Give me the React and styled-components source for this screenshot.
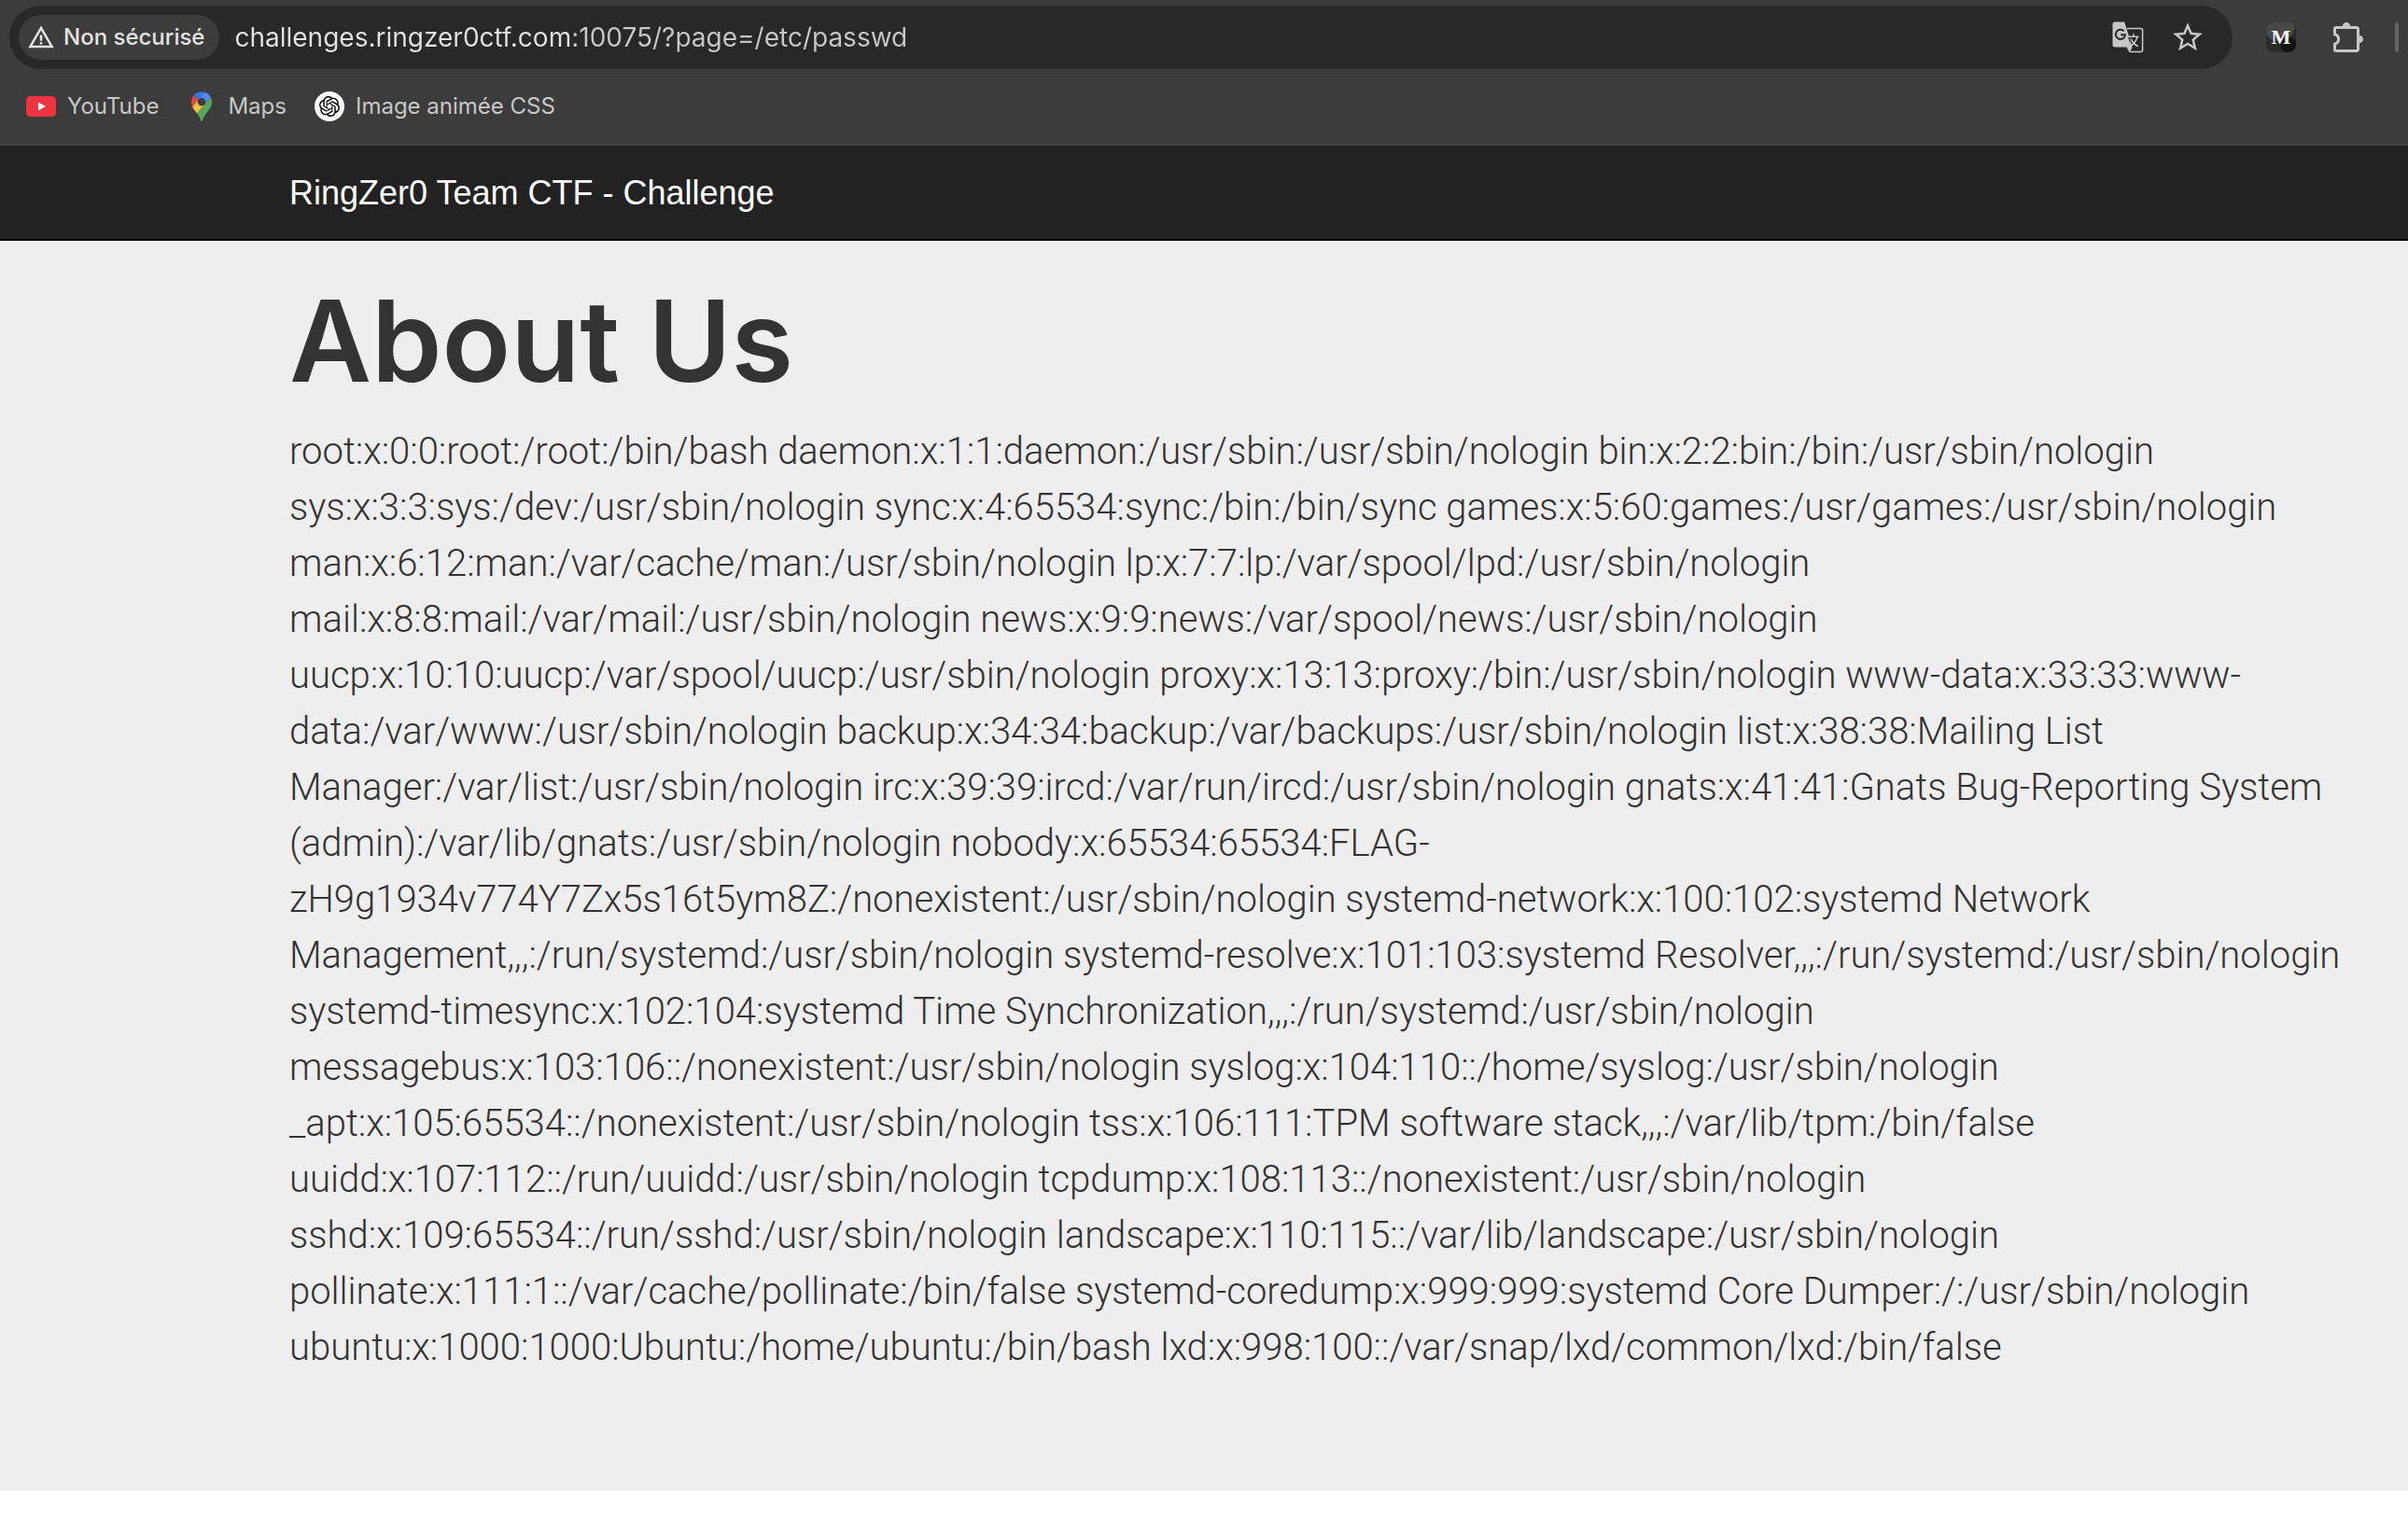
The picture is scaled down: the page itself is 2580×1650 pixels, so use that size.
import React, { useState } from "react";
import styled, { createGlobalStyle } from "styled-components";
import { MdStarBorder, MdWarningAmber } from "react-icons/md";
import { SiOpenai } from "react-icons/si";

const GlobalStyle = createGlobalStyle`
  *, *::before, *::after { box-sizing: border-box; }
  body { margin: 0; background: #fff; }
  svg { flex: none; }
`;

const uiFont = `Inter, "Liberation Sans", sans-serif`;

const Page = styled.div`
  display: flex;
  flex-direction: column;
`;

const Browser = styled.header`
  display: flex;
  flex-direction: column;
  background: #3c3c3c;
  border-bottom: 2px solid #464646;
  font-family: ${uiFont};
`;

const Toolbar = styled.div`
  display: flex;
  align-items: center;
  padding: 6px 10px;
`;

const AddressBar = styled.div`
  flex: 1;
  min-width: 0;
  height: 68px;
  display: flex;
  align-items: center;
  padding: 0 29px 0 10px;
  border-radius: 34px;
  background: #282828;
`;

const IconButton = styled.button`
  flex: none;
  display: flex;
  align-items: center;
  justify-content: center;
  width: ${(p) => p.$size}px;
  height: ${(p) => p.$size}px;
  padding: 0;
  border: 0;
  background: none;
  color: #c7c7c7;
`;

const SecurityChip = styled.button`
  flex: none;
  display: flex;
  align-items: center;
  gap: 9px;
  height: 48px;
  padding: 0 16px 0 9px;
  border: 0;
  border-radius: 24px;
  background: #3c3c3c;
  color: #e3e3e3;
  font: 500 24px/32px ${uiFont};
`;

const AddressInput = styled.input`
  flex: 1;
  min-width: 0;
  height: 48px;
  margin: 0 16px;
  padding: 0;
  border: 0;
  outline: 0;
  background: linear-gradient(90deg, #e3e3e3 360px, #c7c7c7 360px);
  background-clip: text;
  -webkit-background-clip: text;
  -webkit-text-fill-color: transparent;
  color: #e3e3e3;
  font: 400 28px/48px ${uiFont};
`;

const AddressActions = styled.div`
  display: flex;
  align-items: center;
  gap: 27px;
`;

const Extensions = styled.div`
  display: flex;
  align-items: center;
  gap: 40px;
  padding-left: 36px;
`;

const MediumButton = styled(IconButton)`
  border-radius: 8px;
  background:
    radial-gradient(circle at 24px 24px, #141414 8px, transparent 9px),
    radial-gradient(circle at 14px 4px, #484848 16px, transparent 17px),
    #2b2b2b;
  color: #fff;
  font: 700 22px/32px "Liberation Serif", serif;
`;

const Divider = styled.span`
  width: 4px;
  height: 32px;
  margin-left: -8px;
  border-radius: 2px;
  background: #636363;
`;

const Bookmarks = styled.nav`
  display: flex;
  align-items: center;
  gap: 30px;
  padding: 14px 28px 20px;
`;

const Bookmark = styled.a`
  display: flex;
  align-items: center;
  gap: 12px;
  height: 40px;
  color: #c7c7c7;
  font-size: 24px;
  line-height: 32px;
  text-decoration: none;
`;

const Favicon = styled.span`
  display: flex;
  align-items: center;
  justify-content: center;
  width: 32px;
  height: 32px;
  border-radius: 50%;
  background: ${(p) => p.$fill || "none"};
  color: #000;
`;

const SiteNav = styled.nav`
  display: flex;
  align-items: center;
  height: 102px;
  padding: 2px 60px 0 310px;
  background: #222;
  border-bottom: 2px solid #080808;
`;

const Brand = styled.a`
  color: #fff;
  font: 400 36px/40px "Liberation Sans", Arial, sans-serif;
  text-decoration: none;
`;

const Jumbotron = styled.main`
  padding: 44px 60px 123px 310px;
  background: #eee;
  color: #333;
`;

const Title = styled.h1`
  margin: 0 0 26px;
  font: 600 121px/126px Inter, "Liberation Sans", sans-serif;
`;

const Lead = styled.p`
  margin: 0;
  font: 300 40px/60px Roboto, "Liberation Sans", sans-serif;
  white-space: pre-line;
`;

const PASSWD = `root:x:0:0:root:/root:/bin/bash daemon:x:1:1:daemon:/usr/sbin:/usr/sbin/nologin bin:x:2:2:bin:/bin:/usr/sbin/nologin
sys:x:3:3:sys:/dev:/usr/sbin/nologin sync:x:4:65534:sync:/bin:/bin/sync games:x:5:60:games:/usr/games:/usr/sbin/nologin
man:x:6:12:man:/var/cache/man:/usr/sbin/nologin lp:x:7:7:lp:/var/spool/lpd:/usr/sbin/nologin
mail:x:8:8:mail:/var/mail:/usr/sbin/nologin news:x:9:9:news:/var/spool/news:/usr/sbin/nologin
uucp:x:10:10:uucp:/var/spool/uucp:/usr/sbin/nologin proxy:x:13:13:proxy:/bin:/usr/sbin/nologin www-data:x:33:33:www-
data:/var/www:/usr/sbin/nologin backup:x:34:34:backup:/var/backups:/usr/sbin/nologin list:x:38:38:Mailing List
Manager:/var/list:/usr/sbin/nologin irc:x:39:39:ircd:/var/run/ircd:/usr/sbin/nologin gnats:x:41:41:Gnats Bug-Reporting System
(admin):/var/lib/gnats:/usr/sbin/nologin nobody:x:65534:65534:FLAG-
zH9g1934v774Y7Zx5s16t5ym8Z:/nonexistent:/usr/sbin/nologin systemd-network:x:100:102:systemd Network
Management,,,:/run/systemd:/usr/sbin/nologin systemd-resolve:x:101:103:systemd Resolver,,,:/run/systemd:/usr/sbin/nologin
systemd-timesync:x:102:104:systemd Time Synchronization,,,:/run/systemd:/usr/sbin/nologin
messagebus:x:103:106::/nonexistent:/usr/sbin/nologin syslog:x:104:110::/home/syslog:/usr/sbin/nologin
_apt:x:105:65534::/nonexistent:/usr/sbin/nologin tss:x:106:111:TPM software stack,,,:/var/lib/tpm:/bin/false
uuidd:x:107:112::/run/uuidd:/usr/sbin/nologin tcpdump:x:108:113::/nonexistent:/usr/sbin/nologin
sshd:x:109:65534::/run/sshd:/usr/sbin/nologin landscape:x:110:115::/var/lib/landscape:/usr/sbin/nologin
pollinate:x:111:1::/var/cache/pollinate:/bin/false systemd-coredump:x:999:999:systemd Core Dumper:/:/usr/sbin/nologin
ubuntu:x:1000:1000:Ubuntu:/home/ubuntu:/bin/bash lxd:x:998:100::/var/snap/lxd/common/lxd:/bin/false`;

const TranslateIcon = () => (
  <svg width="36" height="36" viewBox="0 0 36 36" fill="none">
    <path d="M17 8.6H31.6a2 2 0 0 1 2 2V31.6a2 2 0 0 1-2 2H19.5" stroke="#c7c7c7" strokeWidth="1.5" />
    <path d="M4 1.4H14.2L22.6 28.4L19.8 34.2L16.4 28.4H4a2.5 2.5 0 0 1-2.5-2.5V3.9A2.5 2.5 0 0 1 4 1.4z" fill="#c7c7c7" />
    <path d="M13.6 11.4A5.1 5.1 0 1 0 15 15.2H10.2" stroke="#282828" strokeWidth="2" />
    <path d="M18.4 17.2H29.6M24 14.2V17M28 17.4C27 21.8 24 25.6 20 28M21.2 19.6C22.6 23 25.4 26 28.8 27.8" stroke="#c7c7c7" strokeWidth="1.6" />
    <path d="M18.6 18L20 22.6" stroke="#282828" strokeWidth="1" />
  </svg>
);

const PuzzleIcon = () => (
  <svg width="34" height="34" viewBox="0 -1 34 34" fill="none">
    <path
      d="M1.5 7a1.5 1.5 0 0 1 1.5-1.5H25a1.5 1.5 0 0 1 1.5 1.5V29a1.5 1.5 0 0 1-1.5 1.5H3A1.5 1.5 0 0 1 1.5 29V23.2C4 22.4 5.6 20.4 5.6 18S4 13.6 1.5 12.8z"
      stroke="#c7c7c7"
      strokeWidth="3"
    />
    <path d="M9.8 4.6a4.2 4.6 0 0 1 8.4 0zM27.4 13.8a4.6 4.2 0 0 1 0 8.4z" fill="#c7c7c7" />
  </svg>
);

const YouTubeIcon = () => (
  <svg width="32" height="22" viewBox="0 0 32 22">
    <rect width="32" height="22" rx="4.5" fill="#ee3440" />
    <path d="M13 6.6L21 11L13 15.4z" fill="#fff" />
  </svg>
);

const MapsIcon = () => (
  <svg width="22" height="32" viewBox="0 0 92.3 132.3">
    <path fill="#3577e5" d="M60.2 2.2C55.8.8 51 0 46.1 0 32 0 19.3 6.4 10.8 16.5l21.8 18.3L60.2 2.2z" />
    <path fill="#dc4f40" d="M10.8 16.5C4.1 24.5 0 34.9 0 46.1c0 8.7 1.7 15.7 4.6 22l28-33.3-21.8-18.3z" />
    <path fill="#5089ee" d="M46.2 28.5c9.8 0 17.7 7.9 17.7 17.7 0 4.3-1.6 8.3-4.2 11.4 0 0 13.9-16.6 27.5-32.7-5.6-10.8-15.3-19-27-22.7L32.6 34.8c3.3-3.8 8.1-6.3 13.6-6.3" />
    <path fill="#f5bf42" d="M46.2 63.8c-9.8 0-17.7-7.9-17.7-17.7 0-4.3 1.5-8.3 4.1-11.3l-28 33.3c4.8 10.6 12.8 19.2 21 29.9l34.1-40.5c-3.3 3.9-8.1 6.3-13.5 6.3" />
    <path fill="#58a65c" d="M59.1 109.2c15.4-24.1 33.3-35 33.3-63 0-7.7-1.9-14.9-5.2-21.3L25.6 98c2.6 3.4 5.3 7.3 7.9 11.3 9.4 14.5 6.8 23.1 12.8 23.1s3.4-8.7 12.8-23.2" />
  </svg>
);

const BOOKMARKS = [
  { label: "YouTube", icon: <YouTubeIcon /> },
  { label: "Maps", icon: <MapsIcon /> },
  { label: "Image animée CSS", icon: <SiOpenai size={22} />, fill: "#fff" },
];

export default function App() {
  const [url, setUrl] = useState("challenges.ringzer0ctf.com:10075/?page=/etc/passwd");
  return (
    <Page>
      <GlobalStyle />
      <Browser>
        <Toolbar>
          <AddressBar>
            <SecurityChip type="button">
              <MdWarningAmber size={30} />
              Non sécurisé
            </SecurityChip>
            <AddressInput
              aria-label="Adresse"
              spellCheck={false}
              value={url}
              onChange={(e) => setUrl(e.target.value)}
            />
            <AddressActions>
              <IconButton type="button" $size={36} aria-label="Traduire cette page">
                <TranslateIcon />
              </IconButton>
              <IconButton type="button" $size={38} aria-label="Ajouter aux favoris">
                <MdStarBorder size={38} />
              </IconButton>
            </AddressActions>
          </AddressBar>
          <Extensions>
            <MediumButton type="button" $size={32}>M</MediumButton>
            <IconButton type="button" $size={34} aria-label="Extensions">
              <PuzzleIcon />
            </IconButton>
            <Divider />
          </Extensions>
        </Toolbar>
        <Bookmarks>
          {BOOKMARKS.map((b) => (
            <Bookmark key={b.label} href="#">
              <Favicon $fill={b.fill}>{b.icon}</Favicon>
              {b.label}
            </Bookmark>
          ))}
        </Bookmarks>
      </Browser>
      <SiteNav>
        <Brand href="#">RingZer0 Team CTF - Challenge</Brand>
      </SiteNav>
      <Jumbotron>
        <Title>About Us</Title>
        <Lead>{PASSWD}</Lead>
      </Jumbotron>
    </Page>
  );
}
